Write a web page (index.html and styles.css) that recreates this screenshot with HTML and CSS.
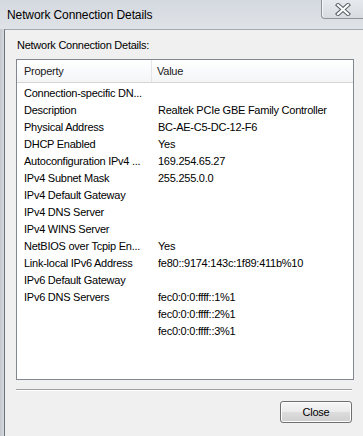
FILE: index.html
```html
<!DOCTYPE html>
<html>
<head>
<meta charset="utf-8">
<link rel="stylesheet" href="styles.css">
</head>
<body>
<div class="window">
  <div class="titlebar">
    <span class="title">Network Connection Details</span>
    <div class="closebtn">
      <svg width="16" height="13" viewBox="0 0 16 13">
        <path d="M3 2 L13 11 M13 2 L3 11" stroke="#5a5f66" stroke-width="4.2" stroke-linecap="square" fill="none"/>
        <path d="M3 2 L13 11 M13 2 L3 11" stroke="#ffffff" stroke-width="2.2" stroke-linecap="square" fill="none"/>
      </svg>
    </div>
  </div>
  <div class="client">
    <div class="label">Network Connection Details:</div>
    <div class="listview">
      <div class="header">
        <div class="hcell c1">Property</div>
        <div class="hcell c2">Value</div>
      </div>
      <div class="rows">
        <div class="row"><span class="c1">Connection-specific DN...</span><span class="c2"></span></div>
        <div class="row"><span class="c1">Description</span><span class="c2">Realtek PCIe GBE Family Controller</span></div>
        <div class="row"><span class="c1">Physical Address</span><span class="c2">BC-AE-C5-DC-12-F6</span></div>
        <div class="row"><span class="c1">DHCP Enabled</span><span class="c2">Yes</span></div>
        <div class="row"><span class="c1">Autoconfiguration IPv4 ...</span><span class="c2">169.254.65.27</span></div>
        <div class="row"><span class="c1">IPv4 Subnet Mask</span><span class="c2">255.255.0.0</span></div>
        <div class="row"><span class="c1">IPv4 Default Gateway</span><span class="c2"></span></div>
        <div class="row"><span class="c1">IPv4 DNS Server</span><span class="c2"></span></div>
        <div class="row"><span class="c1">IPv4 WINS Server</span><span class="c2"></span></div>
        <div class="row"><span class="c1">NetBIOS over Tcpip En...</span><span class="c2">Yes</span></div>
        <div class="row"><span class="c1">Link-local IPv6 Address</span><span class="c2">fe80::9174:143c:1f89:411b%10</span></div>
        <div class="row"><span class="c1">IPv6 Default Gateway</span><span class="c2"></span></div>
        <div class="row"><span class="c1">IPv6 DNS Servers</span><span class="c2">fec0:0:0:ffff::1%1</span></div>
        <div class="row"><span class="c1"></span><span class="c2">fec0:0:0:ffff::2%1</span></div>
        <div class="row"><span class="c1"></span><span class="c2">fec0:0:0:ffff::3%1</span></div>
      </div>
    </div>
    <div class="separator"></div>
    <div class="buttons">
      <button class="btn">Close</button>
    </div>
  </div>
</div>
</body>
</html>
```
FILE: styles.css
```css
html, body {
  margin: 0;
  padding: 0;
}
body {
  width: 363px;
  height: 436px;
  overflow: hidden;
  background: #cdd2d8;
  font-family: "Liberation Sans", Arial, sans-serif;
  font-size: 11px;
  letter-spacing: -0.25px;
  color: #000;
}
.window {
  display: flex;
  flex-direction: column;
  height: 436px;
  background: linear-gradient(to right, #c3c8ce 0, #d6dadf 4px);
}
.titlebar {
  height: 29px;
  display: flex;
  justify-content: space-between;
  align-items: flex-start;
  background: linear-gradient(to bottom, #d4d9df, #dfe3e8);
}
.title {
  font-size: 12px;
  letter-spacing: -0.1px;
  margin-left: 7px;
  margin-top: 8px;
  color: #000;
}
.closebtn {
  width: 43px;
  height: 19px;
  margin-right: -1px;
  box-sizing: border-box;
  border: 1px solid #8d939a;
  border-top: none;
  border-radius: 0 0 0 4px;
  background: linear-gradient(to bottom, #e6e9ed, #d8dce1);
  box-shadow: inset 1px 0 0 #f4f6f8;
  display: flex;
  align-items: center;
  justify-content: center;
}
.client {
  flex: 1;
  margin-left: 4px;
  border-left: 1px solid #6d737a;
  border-top: 1px solid #a3a9b0;
  background: #f0f0f0;
  padding: 8px 9px 0 11px;
  display: flex;
  flex-direction: column;
}
.label {
  height: 15px;
  line-height: 15px;
  margin-left: 1px;
  margin-bottom: 6px;
}
.listview {
  width: 338px;
  height: 321px;
  box-sizing: border-box;
  border: 1px solid #828790;
  background: #fff;
  display: flex;
  flex-direction: column;
}
.header {
  display: flex;
  height: 23px;
  box-sizing: border-box;
  border-bottom: 1px solid #d5d5d5;
  background: linear-gradient(to bottom, #ffffff, #f4f5f7);
}
.hcell {
  line-height: 22px;
  padding-left: 7px;
  box-sizing: border-box;
  color: #1a1a1a;
}
.header .c1 {
  width: 135px;
  border-right: 1px solid #e3e5e8;
}
.header .c2 {
  flex: 1;
  padding-left: 5px;
}
.rows {
  padding-top: 2px;
  display: flex;
  flex-direction: column;
}
.row {
  display: flex;
  height: 17px;
  line-height: 17px;
}
.row .c1 {
  width: 141px;
  flex-shrink: 0;
  padding-left: 7px;
  box-sizing: border-box;
  white-space: nowrap;
}
.row .c2 {
  white-space: nowrap;
}
.separator {
  width: 336px;
  margin-top: 9px;
  height: 1px;
  background: #a0a0a0;
  border-bottom: 1px solid #ffffff;
}
.buttons {
  display: flex;
  justify-content: flex-end;
  padding-right: 2px;
  margin-top: 10px;
}
.btn {
  width: 72px;
  height: 22px;
  box-sizing: border-box;
  border: 1px solid #707070;
  border-radius: 3px;
  background: linear-gradient(to bottom, #f6f6f6 0, #ebebeb 50%, #dddddd 51%, #cfcfcf 100%);
  box-shadow: inset 0 0 0 1px #fcfcfc;
  font-family: "Liberation Sans", Arial, sans-serif;
  font-size: 11px;
  letter-spacing: -0.25px;
  color: #000;
  padding: 0;
}
```
